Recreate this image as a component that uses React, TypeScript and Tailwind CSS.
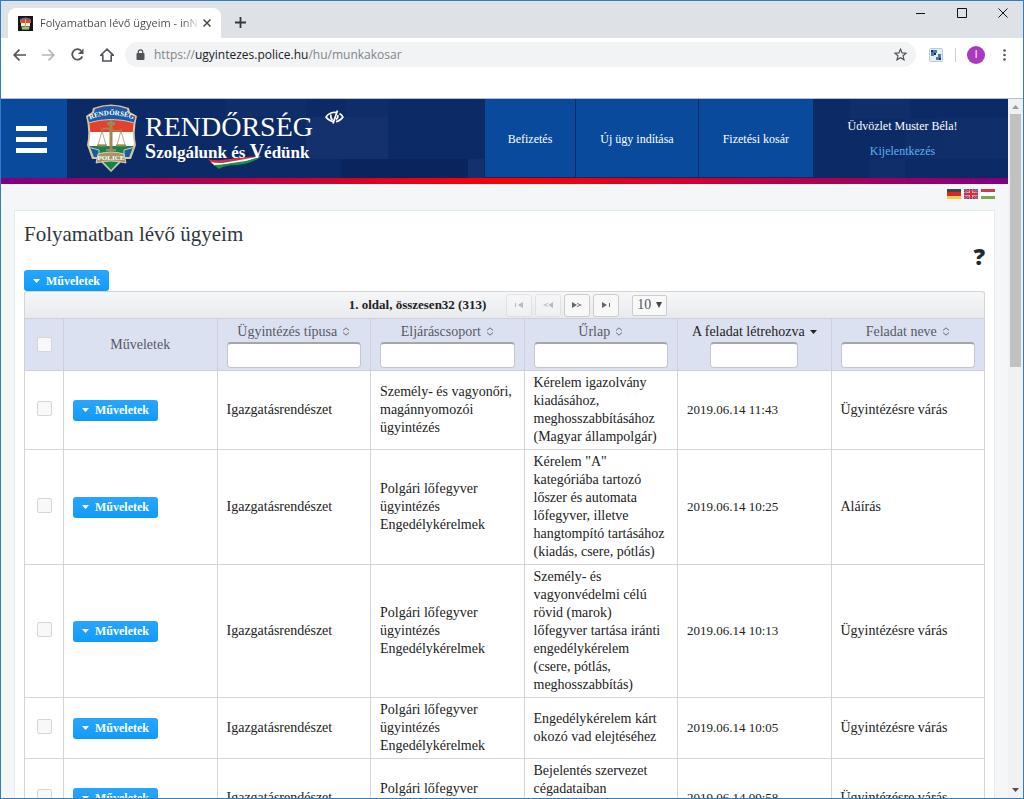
import type { ReactNode } from 'react'

type Row = {
  group: string
  form: string
  created: string
  task: string
}

const rows: Row[] = [
  {
    group: 'Személy- és vagyonőri,\nmagánnyomozói\nügyintézés',
    form: 'Kérelem igazolvány\nkiadásához,\nmeghosszabbításához\n(Magyar állampolgár)',
    created: '2019.06.14 11:43',
    task: 'Ügyintézésre várás',
  },
  {
    group: 'Polgári lőfegyver\nügyintézés\nEngedélykérelmek',
    form: 'Kérelem "A"\nkategóriába tartozó\nlőszer és automata\nlőfegyver, illetve\nhangtompító tartásához\n(kiadás, csere, pótlás)',
    created: '2019.06.14 10:25',
    task: 'Aláírás',
  },
  {
    group: 'Polgári lőfegyver\nügyintézés\nEngedélykérelmek',
    form: 'Személy- és\nvagyonvédelmi célú\nrövid (marok)\nlőfegyver tartása iránti\nengedélykérelem\n(csere, pótlás,\nmeghosszabbítás)',
    created: '2019.06.14 10:13',
    task: 'Ügyintézésre várás',
  },
  {
    group: 'Polgári lőfegyver\nügyintézés\nEngedélykérelmek',
    form: 'Engedélykérelem kárt\nokozó vad elejtéséhez',
    created: '2019.06.14 10:05',
    task: 'Ügyintézésre várás',
  },
  {
    group: 'Polgári lőfegyver\nügyintézés Bejelentések',
    form: 'Bejelentés szervezet\ncégadataiban\nbekövetkezett\nváltozásról',
    created: '2019.06.14 09:58',
    task: 'Ügyintézésre várás',
  },
]

const columns = [
  { label: 'Ügyintézés típusa' },
  { label: 'Eljáráscsoport' },
  { label: 'Űrlap' },
  { label: 'A feladat létrehozva', sorted: true },
  { label: 'Feladat neve' },
]

const TabStrip = () => (
  <div className="flex h-[37px] shrink-0 items-start bg-[#dee1e6]">
    <div className="mt-[7px] ml-[7px] flex h-[30px] w-[213px] items-center rounded-t-lg bg-white pr-[6px] pl-[10px]">
      <svg width="15" height="15" viewBox="0 0 15 15" className="shrink-0">
        <rect width="15" height="15" fill="#15151c" />
        <path d="M2 3Q7.5 0 13 3L12 6H3Z" fill="#6d6a7c" />
        <path d="M2 4H13V7H2Z" fill="#e0483c" />
        <path d="M3 7H12V10H3Z" fill="#f2eee4" />
        <path d="M3 10H12L11 14H4Z" fill="#3c8b49" />
        <path d="M7 3H8V11H7ZM4 11H11V13H4Z" fill="#c9ac6e" />
      </svg>
      <span className="ml-[7px] flex-1 overflow-hidden bg-linear-to-r from-[#45494d] from-90% to-transparent bg-clip-text text-[11px] leading-4 whitespace-nowrap text-transparent">
        Folyamatban lévő ügyeim - inNOVA
      </span>
      <button aria-label="Lap bezárása" className="p-1">
        <svg width="8" height="8" viewBox="0 0 8 8" stroke="#45494d" strokeWidth="1.5">
          <path d="M.5.5l7 7M7.5.5l-7 7" />
        </svg>
      </button>
    </div>
    <button aria-label="Új lap" className="mt-[16px] ml-[14px]">
      <svg width="11" height="11" viewBox="0 0 11 11" stroke="#34373b" strokeWidth="1.8">
        <path d="M5.5 0v11M0 5.5h11" />
      </svg>
    </button>
    <div className="mt-[7px] mr-[15px] ml-auto flex gap-[31px]">
      <button aria-label="Kis méret">
        <svg width="10" height="10" viewBox="0 0 10 10" stroke="#111">
          <path d="M0 5.5h9" />
        </svg>
      </button>
      <button aria-label="Teljes méret">
        <svg width="10" height="10" viewBox="0 0 10 10" stroke="#111" fill="none">
          <path d="M.5.5h9v9h-9z" />
        </svg>
      </button>
      <button aria-label="Bezárás">
        <svg width="10" height="10" viewBox="0 0 10 10" stroke="#111">
          <path d="M.5.5l9 9M9.5.5l-9 9" />
        </svg>
      </button>
    </div>
  </div>
)

const Toolbar = () => (
  <div className="flex h-[60px] shrink-0 items-start bg-white pt-[4px]">
    <div className="flex h-[25px] items-center gap-4 pl-[12px]">
      <button aria-label="Vissza">
        <svg width="13" height="12" viewBox="0 0 13 12" fill="none" stroke="#505357" strokeWidth="1.7">
          <path d="M13 6H1.2M6.5.7L1.2 6l5.3 5.3" />
        </svg>
      </button>
      <button aria-label="Előre">
        <svg width="13" height="12" viewBox="0 0 13 12" fill="none" stroke="#b5b7ba" strokeWidth="1.7">
          <path d="M0 6h11.8M6.5.7L11.8 6l-5.3 5.3" />
        </svg>
      </button>
      <button aria-label="Újratöltés">
        <svg width="13" height="13" viewBox="0 0 13 13">
          <path d="M11.3 8.3A5.2 5.2 0 1 1 10.2 2.8" fill="none" stroke="#505357" strokeWidth="1.8" />
          <path d="M12.5.5V6H7z" fill="#505357" />
        </svg>
      </button>
      <button aria-label="Kezdőlap">
        <svg width="14" height="14" viewBox="0 0 14 14" fill="none" stroke="#505357" strokeWidth="1.6">
          <path d="M.7 7.3L7 1.2l6.3 6.1H11.2v5.7H2.8V7.3z" />
        </svg>
      </button>
    </div>
    <div className="ml-[11px] flex h-[25px] flex-1 items-center rounded-full bg-[#f1f3f4] pr-[9px] pl-[11px]">
      <svg width="9" height="11" viewBox="0 0 9 11" className="shrink-0">
        <rect x=".5" y="4" width="8" height="7" rx="1" fill="#505357" />
        <path d="M2.3 4.5V3a2.2 2.2 0 0 1 4.4 0v1.5" fill="none" stroke="#505357" strokeWidth="1.2" />
      </svg>
      <a href="https://ugyintezes.police.hu/hu/munkakosar" className="ml-[9px] flex-1 text-xs text-[#80868b]">
        https://<span className="text-[#202124]">ugyintezes.police.hu</span>/hu/munkakosar
      </a>
      <button aria-label="Könyvjelző">
        <svg width="13" height="13" viewBox="0 0 13 13" fill="none" stroke="#505357" strokeWidth="1.2">
          <path d="M6.5 1.2l1.6 3.7 4 .3-3.1 2.6 1 4-3.5-2.1L3 11.8l1-4L.9 5.2l4-.3z" />
        </svg>
      </button>
    </div>
    <div className="flex h-[25px] items-center pr-[17px] pl-[13px]">
      <button aria-label="Bővítmény">
        <svg width="14" height="14" viewBox="0 0 14 14">
          <rect x=".5" y=".5" width="13" height="13" rx="1" fill="#e4eef7" stroke="#b4cde2" />
          <path d="M2 2h3v3H2zM5 2h3v3H5zM2 5h3v3H2zM9 6h3v3H9zM7 9h5v3H7z" fill="#4b7aa8" />
          <path d="M2 2h2v2H2zM5 5h2v2H5zM10 10h2v2h-2z" fill="#17324f" />
        </svg>
      </button>
      <span className="ml-[12px] h-[14px] w-px bg-[#c9ccd0]" />
      <button className="ml-[11px] h-[18px] w-[18px] rounded-full bg-[#ab39bd] font-[Roboto,sans-serif] text-[10px] text-white">
        I
      </button>
      <button aria-label="Menü" className="ml-[18px]">
        <svg width="3" height="12" viewBox="0 0 3 12" fill="#505357">
          <circle cx="1.5" cy="1.5" r="1.3" />
          <circle cx="1.5" cy="6" r="1.3" />
          <circle cx="1.5" cy="10.5" r="1.3" />
        </svg>
      </button>
    </div>
  </div>
)

const Badge = () => (
  <svg width="52" height="68" viewBox="0 0 52 68" className="shrink-0">
    <defs>
      <clipPath id="shield">
        <path d="M3 13L9 9L10 5Q26-1 42 5L43 9L50 13Q46 27 49 40L44 53H38L26 66L14 53H9L4 40Q7 27 3 13Z" />
      </clipPath>
      <path id="arc" d="M5 15.5Q26 6.5 48 15.5" />
    </defs>
    <path
      d="M1 12L7 8L8 4Q26-3 44 4L45 8L52 12Q48 27 51 41L46 55H39L26 68L13 55H7L2 41Q5 27 1 12Z"
      fill="#cfc4a4"
    />
    <g clipPath="url(#shield)">
      <rect width="52" height="28" fill="#e4402f" />
      <rect y="28" width="52" height="14" fill="#fff" />
      <rect y="42" width="52" height="26" fill="#15834a" />
      <path d="M0 0H52V20Q26 12 0 20Z" fill="#1d5aa3" />
      <path d="M3 43L14 46V56H3ZM50 43L39 46V56H50Z" fill="#1d5aa3" />
      <path d="M3 19Q26 12 50 19" fill="none" stroke="#d9d0b4" />
      <path d="M3 43L14 46V56M50 43L39 46V56" fill="none" stroke="#d9d0b4" />
    </g>
    <path d="M24.5 16h3v31h-3zM22 18h8v3h-8z" fill="#a3854f" />
    <g stroke="#a3854f" fill="none" strokeWidth="1">
      <path d="M16 26Q21 23 26 25.5T37 26" strokeWidth="1.6" />
      <path d="M17 27l-4 14h8zM36 27l-4 14h8z" strokeWidth=".7" />
      <path d="M12 41.5h10M31 41.5h10" strokeWidth="2" />
      <path d="M21 46h10" strokeWidth="2" />
    </g>
    <path d="M13 50Q26 46 39 50L41 59Q26 55 11 59Z" fill="#a6946c" stroke="#d9d0b4" />
    <text fontSize="7" fontWeight="bold" fill="#fff" fontFamily="Liberation Serif, serif">
      <textPath href="#arc" startOffset="50%" textAnchor="middle">
        RENDŐRSÉG
      </textPath>
    </text>
    <text x="26" y="55.5" fontSize="7" fontWeight="bold" fill="#fff" textAnchor="middle" fontFamily="Liberation Serif, serif">
      POLICE
    </text>
  </svg>
)

const Logo = () => (
  <div className="ml-[18px] flex items-start pt-[5px] text-[#fff]">
    <Badge />
    <div className="relative ml-[8px] pt-[9px]">
      <div className="text-[28px] leading-7">RENDŐRSÉG</div>
      {/* tricolour ribbon behind the motto */}
      <svg width="56" height="14" viewBox="0 0 56 14" className="absolute top-[51px] left-[63px]">
        <path d="M0 4Q6 6 14 5Q32 2 52 1Q34 6 18 7L4 9Z" fill="#d8303a" />
        <path d="M3 7Q10 9 20 7Q38 4 53 1Q38 8 20 9L7 11Z" fill="#fff" />
        <path d="M6 10Q14 10 24 8Q40 7 54 1Q42 10 28 10Q17 10 11 14Z" fill="#17924c" />
      </svg>
      <div className="relative text-[17px] leading-5 font-bold">
        <span className="text-[20px]">S</span>zolgálunk és <span className="text-[20px]">V</span>édünk
      </div>
    </div>
    <button aria-label="Akadálymentes nézet" className="mt-[6px] ml-3">
      <svg width="19" height="14" viewBox="0 0 19 14" fill="none" stroke="#fff" strokeWidth="1.6">
        <path d="M8 11.5Q4 11 1 7Q4 2.5 9.5 2.2Q11 2.2 12 2.5M14.5 3.5Q17 5 18 7Q15 11 11 11.7" />
        <path d="M7.5 10Q5 8 6 4.5M12.8 5Q13.5 8 11 9.5" />
        <path d="M12.5.5L8 13.5" strokeWidth="1.8" />
      </svg>
    </button>
  </div>
)

const NavItem = ({ children }: { children: ReactNode }) => (
  <a
    href="#"
    className="mb-px flex items-center border-r border-[#0c2a66] bg-[#094a9c] px-[23px] pt-[2px] text-white last:border-r-0"
  >
    {children}
  </a>
)

const Header = () => (
  <header className="relative flex h-[79px] shrink-0 bg-[#0c2a66] text-xs">
    <svg
      className="absolute inset-0 h-full w-full"
      viewBox="0 0 1007 79"
      preserveAspectRatio="none"
      fill="#14316e"
    >
      <path d="M305 18h82v42h-82zM467 60h16v19h-16z" />
      <path d="M849 0h60v20h-60zM868 60h36v19h-36zM942 18h65v42h-65z" opacity=".5" />
      <path d="M225 0h80v18h-80zM904 20h38v40h-38zM345 0h42v18h-42z" opacity=".4" />
      <path d="M340 60h127v19h-127z" fill="#0a2358" opacity=".6" />
    </svg>
    <button aria-label="Menü" className="relative flex w-[66px] flex-col justify-center gap-[6px] bg-[#094a9c] pt-[2px] pl-[15px]">
      <span className="h-[5px] w-[31px] bg-white" />
      <span className="h-[5px] w-[31px] bg-white" />
      <span className="h-[5px] w-[31px] bg-white" />
    </button>
    <div className="relative">
      <Logo />
    </div>
    <nav className="relative ml-auto flex">
      <NavItem>Befizetés</NavItem>
      <NavItem>
        <span className="px-px">Új ügy indítása</span>
      </NavItem>
      <NavItem>
        <span className="px-px">Fizetési kosár</span>
      </NavItem>
    </nav>
    <div className="relative flex w-[195px] flex-col items-center gap-[7px] pt-[18px] pr-4 leading-[18px]">
      <span className="text-white">Üdvözlet Muster Béla!</span>
      <a href="#" className="text-[#5fb0f5]">
        Kijelentkezés
      </a>
    </div>
  </header>
)

const Flags = () => (
  <div className="flex justify-end gap-[3px] pt-[5px] pr-[13px]">
    <button aria-label="Deutsch">
      <svg width="14" height="10" viewBox="0 0 14 10">
        <path d="M0 0h14v4H0z" fill="#444" />
        <path d="M0 3h14v4H0z" fill="#d9262b" />
        <path d="M0 7h14v3H0z" fill="#f6cf3a" />
      </svg>
    </button>
    <button aria-label="English">
      <svg width="14" height="10" viewBox="0 0 14 10">
        <rect width="14" height="10" fill="#41508f" />
        <path d="M0 0l14 10M14 0L0 10" stroke="#e8b9c4" strokeWidth="2.2" />
        <path d="M0 0l14 10M14 0L0 10" stroke="#d92a36" strokeWidth="1.4" />
        <path d="M7 0v10M0 5h14" stroke="#f3dbe0" strokeWidth="3" />
        <path d="M7 0v10M0 5h14" stroke="#d92a36" strokeWidth="2" />
      </svg>
    </button>
    <button aria-label="Magyar">
      <svg width="14" height="10" viewBox="0 0 14 10">
        <rect width="14" height="10" fill="#fff" />
        <path d="M0 0h14v3H0z" fill="#d03a44" />
        <path d="M0 7h14v3H0z" fill="#76ab52" />
      </svg>
    </button>
  </div>
)

const ActionButton = () => (
  <button className="flex h-[21px] w-[85px] items-center rounded-[3px] bg-linear-to-b from-[#2aa5fb] to-[#0c9bfb] pl-[9px] text-xs font-bold text-white">
    <svg width="7" height="4" viewBox="0 0 7 4" fill="#fff" className="mr-[6px]">
      <path d="M0 0h7L3.5 4z" />
    </svg>
    Műveletek
  </button>
)

const SortIcon = ({ sorted }: { sorted?: boolean }) =>
  sorted ? (
    <svg width="7" height="4" viewBox="0 0 7 4" fill="#222">
      <path d="M0 0h7L3.5 4z" />
    </svg>
  ) : (
    <svg width="8" height="9" viewBox="0 0 8 9" fill="none" stroke="#666b78">
      <path d="M1 3.5L4 .8l3 2.7M1 5.5l3 2.7 3-2.7" />
    </svg>
  )

const PageButton = ({ label, disabled, children }: { label: string; disabled?: boolean; children: ReactNode }) => (
  <button
    aria-label={label}
    disabled={disabled}
    className="flex h-[23px] w-[26px] items-center justify-center rounded-[3px] border border-[#ccc] bg-[#f8f8f9] disabled:opacity-40"
  >
    <svg width="10" height="6" viewBox="0 0 10 6" fill="#666">
      {children}
    </svg>
  </button>
)

const Pager = () => (
  <div className="flex h-[27px] items-center justify-center rounded-t-[3px] border border-b-0 border-[#d5d5d8] bg-linear-to-b from-[#f6f7f9] to-[#e9eaed] pl-[7px]">
    <span className="text-[13px] font-bold text-[#222]">1. oldal, összesen32 (313)</span>
    <div className="ml-[20px] flex gap-[3px]">
      <PageButton label="Első oldal" disabled>
        <path d="M1 1h1v4H1zM9 0v6L4 3z" />
      </PageButton>
      <PageButton label="Előző oldal" disabled>
        <path d="M5 1v1L2 3l3 1v1L0 3zM10 0v6L5.5 3z" />
      </PageButton>
      <PageButton label="Következő oldal">
        <path d="M0 0v6l5-3zM5 1v1l3 1-3 1v1l5-2z" />
      </PageButton>
      <PageButton label="Utolsó oldal">
        <path d="M1 0v6l5-3zM8 1h1v4H8z" />
      </PageButton>
    </div>
    <div className="relative ml-[13px] flex">
      <select
        aria-label="Sorok száma"
        className="h-[21px] w-[35px] appearance-none rounded-[2px] border border-[#ccc] bg-[#f8f8f9] pl-[4px] text-[14px] leading-4 text-[#555]"
      >
        <option>10</option>
      </select>
      <svg width="6" height="6" viewBox="0 0 6 6" fill="#444" className="pointer-events-none absolute top-[7px] right-[5px]">
        <path d="M0 0h6L3 6z" />
      </svg>
    </div>
  </div>
)

const Check = ({ label }: { label: string }) => (
  <input
    type="checkbox"
    aria-label={label}
    className="mx-auto block h-[15px] w-[15px] appearance-none rounded-[2px] border border-[#d6d6d8] bg-[#f8f8f9]"
  />
)

const TaskTable = () => (
  <table className="w-full table-fixed border-collapse text-sm leading-[18px] text-[#222] [&_td]:border [&_td]:border-[#d5d5d8] [&_th]:border [&_th]:border-[#cdd0dc]">
    <colgroup>
      <col className="w-[39px]" />
      <col />
      <col />
      <col />
      <col />
      <col />
      <col />
    </colgroup>
    <thead className="bg-[#dce1f1] text-[#555a66]">
      <tr className="h-[52px]">
        <th>
          <Check label="Összes kijelölése" />
        </th>
        <th className="font-normal">Műveletek</th>
        {columns.map(({ label, sorted }) => (
          <th key={label} className={sorted ? 'px-[9px] font-normal text-[#222]' : 'px-[9px] font-normal'}>
            <div className="flex h-[21px] items-center justify-center gap-[5px] whitespace-nowrap">
              {label}
              <SortIcon sorted={sorted} />
            </div>
            <input
              type="text"
              aria-label={label}
              className={`${sorted ? 'w-[88px]' : 'w-full'} mx-auto block h-[26px] rounded-[4px] border border-t-2 border-[#c4c6cc] border-t-[#a5a6ab] bg-white px-1`}
            />
          </th>
        ))}
      </tr>
    </thead>
    <tbody>
      {rows.map((row) => (
        <tr key={row.created}>
          <td className="pb-[4px]">
            <Check label={row.created} />
          </td>
          <td className="px-[9px]">
            <ActionButton />
          </td>
          <td className="px-[9px] py-[3px]">Igazgatásrendészet</td>
          <td className="py-[3px] pl-[9px] whitespace-pre">{row.group}</td>
          <td className="py-[3px] pl-[9px] whitespace-pre">{row.form}</td>
          <td className="px-[9px] py-[3px] text-[13px]">{row.created}</td>
          <td className="px-[9px] py-[3px]">{row.task}</td>
        </tr>
      ))}
    </tbody>
  </table>
)

const Scrollbar = () => (
  <div className="flex w-[15px] shrink-0 flex-col items-center bg-[#f1f1f1]">
    <svg width="7" height="15" viewBox="0 0 7 15" fill="#9a9a9a">
      <path d="M0 10h7L3.5 6z" />
    </svg>
    <div className="h-[253px] w-[11px] bg-[#c1c1c1]" />
    <svg width="7" height="15" viewBox="0 0 7 15" fill="#505050" className="mt-auto">
      <path d="M0 5h7L3.5 9z" />
    </svg>
  </div>
)

const App = () => {
  return (
    <div className="flex h-screen flex-col overflow-hidden border border-[#2f7fc0] font-['Open_Sans','Noto_Sans',sans-serif]">
      <TabStrip />
      <Toolbar />
      <div className="flex min-h-0 flex-1 border-t border-[#b9bcc2] font-['Liberation_Serif',serif]">
        <div className="flex min-w-0 flex-1 flex-col overflow-hidden bg-[#f5f6f8]">
          <Header />
          <div className="h-[6px] shrink-0 bg-linear-to-r/srgb from-[#800080] via-[#ff0000] to-[#800080]" />
          <Flags />
          <main className="mx-[13px] mt-[11px] shrink-0 border border-[#e0ebee] bg-white px-[9px]">
            <h1 className="pt-[9px] text-[21px] leading-7 text-[#2f3740]">Folyamatban lévő ügyeim</h1>
            <div className="flex h-[22px] justify-end">
              <button
                aria-label="Súgó"
                className="h-4 font-['Open_Sans',sans-serif] text-[23px] leading-4 font-extrabold text-[#1f2a35]"
              >
                ?
              </button>
            </div>
            <ActionButton />
            <Pager />
            <TaskTable />
          </main>
        </div>
        <Scrollbar />
      </div>
    </div>
  )
}

export default App
